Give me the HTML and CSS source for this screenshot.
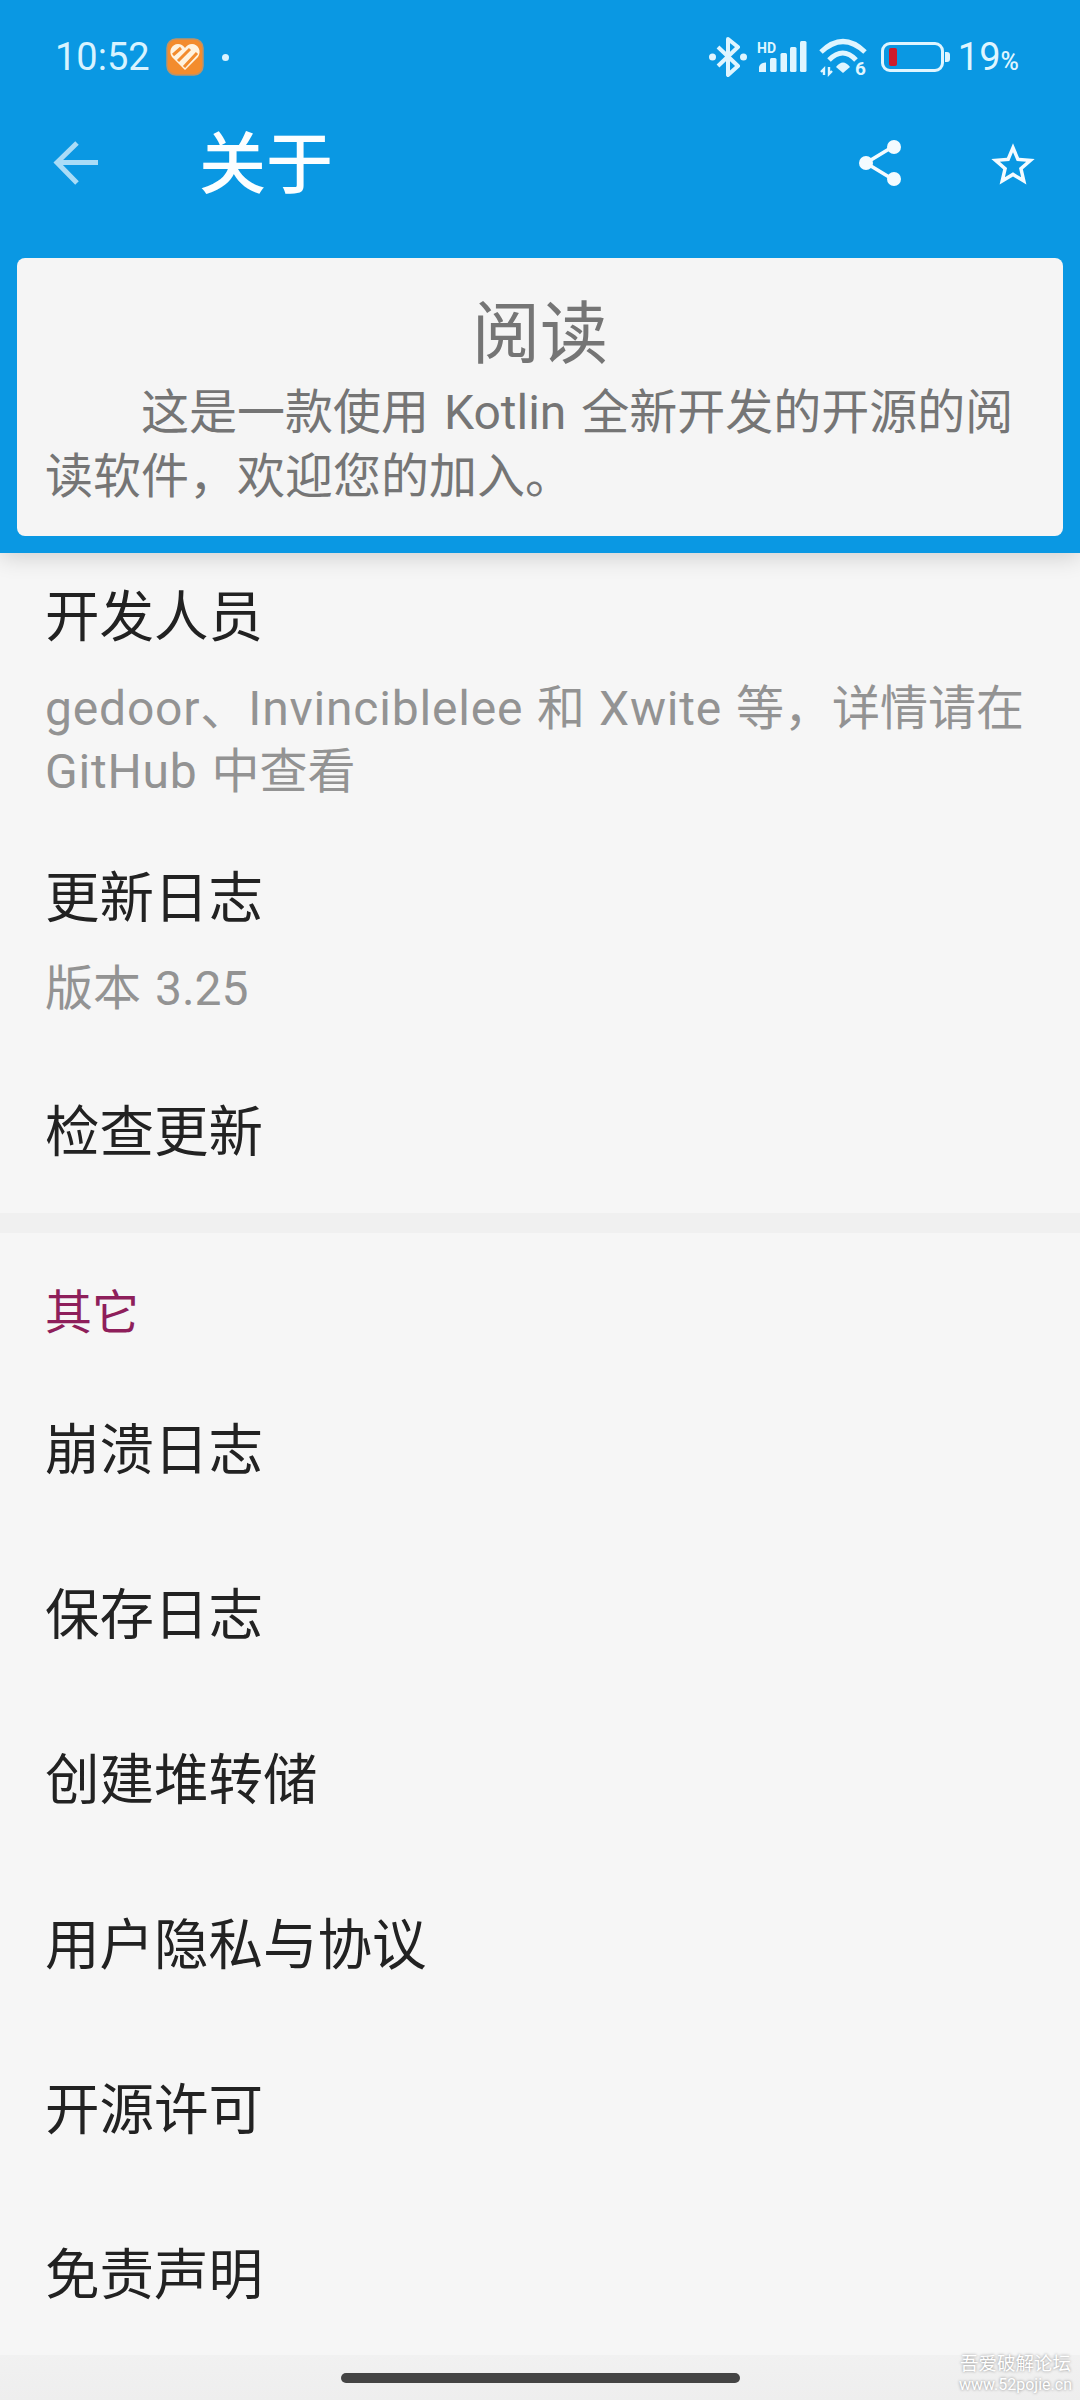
FILE: index.html
```html
<!DOCTYPE html>
<html lang="zh-CN">
<head>
<meta charset="utf-8">
<title>关于</title>
<link rel="stylesheet" href="styles.css">
</head>
<body>
<div class="page">
  <header class="appbar">
    <div class="status">
      <div class="status-left">
        <span class="time">10:52</span>
        <svg class="app-icon" width="38" height="38" viewBox="0 0 38 38">
          <rect x="1" y="1" width="36" height="36" rx="9" fill="#f38c2d" stroke="#b9936b" stroke-width="1.5"/>
          <path d="M19 32 L6 19 C2 13 6 6 12 6 C15 6 17 7.5 19 10 C21 7.5 23 6 26 6 C32 6 36 13 32 19 Z" fill="#fff3df"/>
          <path d="M7 17 L15 10 M12 23 L24 11 M18 29 L31 15" stroke="#f38c2d" stroke-width="3" fill="none"/>
        </svg>
        <span class="dot"></span>
      </div>
      <div class="status-right">
        <svg class="bt" width="38" height="40" viewBox="0 0 38 40">
          <path d="M9 10 L29 29 L19 38 V2 L29 10 L9 29" fill="none" stroke="#dff5ff" stroke-width="4" stroke-linejoin="round"/>
          <circle cx="3.5" cy="20" r="3.5" fill="#dff5ff"/>
          <circle cx="34.500" cy="20" r="3.5" fill="#dff5ff"/>
        </svg>
        <svg class="signal" width="50" height="32" viewBox="0 0 50 32">
          <text class="hd" x="0" y="12">HD</text>
          <path d="M2 31 V26 Q3 22 9 21.500 V31 Z" fill="#dff5ff"/>
          <rect x="13" y="17" width="6.500" height="14" rx="1.5" fill="#dff5ff"/>
          <rect x="23.500" y="12" width="6.500" height="19" rx="1.5" fill="#dff5ff"/>
          <rect x="33" y="6" width="6.500" height="25" rx="1.5" fill="#dff5ff"/>
          <rect x="43" y="0" width="6.500" height="31" rx="1.5" fill="#dff5ff"/>
        </svg>
        <svg class="wifi" width="50" height="52" viewBox="0 -6 50 52">
          <g fill="none" stroke="#dff5ff" stroke-width="5">
            <path d="M2 15 Q24 -6 46 15"/>
            <path d="M10 23 Q24 9 37 23"/>
          </g>
          <path d="M17 30 Q24 21 31 30 L24 36 Z" fill="#dff5ff"/>
          <path d="M5 38 V32 L2 35 M10 30 V37 L13 34" fill="none" stroke="#dff5ff" stroke-width="2.4"/>
          <text class="six" x="36" y="38">6</text>
        </svg>
        <div class="battery"><span class="battery-level"></span></div>
        <span class="battery-nub"></span>
        <span class="percent">19<small>%</small></span>
      </div>
    </div>
    <div class="toolbar">
      <svg class="back" width="46" height="46" viewBox="0 0 46 46">
        <path d="M24 3 L4 22.500 L24 43 M4 22.500 H45" fill="none" stroke="#a9dcf7" stroke-width="5"/>
      </svg>
      <h1 class="page-title">关于</h1>
      <svg class="share" width="46" height="50" viewBox="0 0 46 50">
        <path d="M36 8 L8 25 L36 42" fill="none" stroke="#f4fbff" stroke-width="3.6"/>
        <circle cx="36" cy="9" r="7" fill="#f4fbff"/>
        <circle cx="8" cy="25" r="7" fill="#f4fbff"/>
        <circle cx="36" cy="41" r="7" fill="#f4fbff"/>
      </svg>
      <svg class="star" width="52" height="52" viewBox="0 0 24 24">
        <path fill="#f4fbff" d="M22 9.240l-7.190-.620L12 2 9.190 8.630 2 9.240l5.460 4.730L5.820 21 12 17.270 18.180 21l-1.630-7.030L22 9.240zM12 15.400l-3.760 2.270 1-4.280-3.320-2.880 4.380-.380L12 6.100l1.710 4.040 4.380.380-3.320 2.880 1 4.280L12 15.400z"/>
      </svg>
    </div>
    <section class="card">
      <h2 class="card-title">阅读</h2>
      <p class="card-text">这是一款使用 Kotlin 全新开发的开源的阅读软件，欢迎您的加入。</p>
    </section>
  </header>

  <main class="content">
    <div class="group">
      <div class="item item-dev">
        <div class="item-title">开发人员</div>
        <div class="item-sub"><span class="latin">gedoor</span>、<span class="latin">Invinciblelee</span> 和 <span class="latin">Xwite</span> 等，详情请在 <span class="latin">GitHub</span> 中查看</div>
      </div>
      <div class="item item-log">
        <div class="item-title">更新日志</div>
        <div class="item-sub">版本 3.25</div>
      </div>
      <div class="row">检查更新</div>
    </div>
    <div class="divider"></div>
    <div class="group">
      <div class="section-label">其它</div>
      <div class="row">崩溃日志</div>
      <div class="row">保存日志</div>
      <div class="row">创建堆转储</div>
      <div class="row">用户隐私与协议</div>
      <div class="row">开源许可</div>
      <div class="row">免责声明</div>
    </div>
  </main>

  <footer class="navbar">
    <span class="handle"></span>
    <div class="watermark">
      <span class="wm-cn">吾爱破解论坛</span>
      <span class="wm-en">www.52pojie.cn</span>
    </div>
  </footer>
</div>
</body>
</html>
```
FILE: styles.css
```css
* { box-sizing: border-box; }
html, body { margin: 0; padding: 0; }
body {
  width: 1080px;
  height: 2400px;
  overflow: hidden;
  background: #f6f6f6;
  font-family: "Roboto", "Noto Sans CJK SC", sans-serif;
}
.page { display: flex; flex-direction: column; height: 2400px; }

.appbar {
  height: 553px;
  background: #0a98e3;
  padding: 0 17px;
  box-shadow: 0 4px 22px rgba(0, 0, 0, 0.16);
  position: relative;
  z-index: 1;
  flex: none;
}
.status {
  height: 114px;
  margin: 0 -17px;
  padding: 0 61px 0 55px;
  display: flex;
  justify-content: space-between;
  align-items: center;
}
.status-left { display: flex; align-items: center; }
.time { font-size: 38px; color: #d8f3ff; line-height: 1; width: 111px; }
.dot { width: 7px; height: 7px; border-radius: 50%; background: #d8f3ff; margin-left: 18px; }
.status-right { display: flex; align-items: center; }
.bt { margin-right: 10px; }
.signal { margin-right: 12px; }
.hd { font: 700 14px "Roboto", sans-serif; fill: #dff5ff; }
.six { font: 700 19px "Roboto", sans-serif; fill: #dff5ff; }
.wifi { margin-right: 12px; }
.battery {
  width: 63px;
  height: 30px;
  border: 3px solid #dff5ff;
  border-radius: 9px;
  padding: 3px 5px;
}
.battery-level { display: block; width: 8px; height: 18px; background: #cf1b2a; border-radius: 2px; }
.battery-nub { width: 5px; height: 10px; background: #dff5ff; border-radius: 0 3px 3px 0; margin: 0 8px 0 1px; }
.percent { font-size: 38px; color: #dff5ff; line-height: 1; }
.percent small { font-size: 25px; font-weight: 500; }

.toolbar {
  height: 98px;
  margin: 0 -17px;
  padding: 0 41px 0 53px;
  display: flex;
  align-items: center;
}
.page-title {
  margin: 4px 0 0 100px;
  flex: 1;
  font-size: 67px;
  font-weight: 500;
  line-height: 1;
  color: #fbfeff;
}
.share { margin-right: 83px; }
.star { margin-top: 3px; }

.card {
  margin-top: 46px;
  height: 278px;
  background: #f5f5f5;
  border-radius: 8px;
  padding: 35px 28px 0;
}
.card-title {
  margin: 0 0 4px;
  text-align: center;
  font-size: 68px;
  font-weight: 400;
  line-height: 84px;
  color: #757575;
}
.card-text {
  margin: 0;
  font-size: 48px;
  line-height: 64px;
  text-indent: 96px;
  word-spacing: 3px;
  color: #757575;
}

.content { flex: 1; min-height: 0; }
.item-title { font-size: 54.500px; line-height: 64px; color: #222; }
.item-sub { font-size: 48px; line-height: 63px; word-spacing: 2px; color: #939393; margin-top: 28px; }
.latin { letter-spacing: 0.8px; }
.item { padding: 0 45px; }
.item-dev { padding-top: 32px; padding-bottom: 13px; }
.item-log { padding-top: 50px; padding-bottom: 24px; }
.item-log .item-sub { margin-top: 27px; line-height: 64px; }
.row {
  height: 165px;
  padding: 0 45px;
  display: flex;
  align-items: center;
  font-size: 54.500px;
  color: #222;
}
.divider { height: 20px; margin-top: 3px; background: #f0f0f0; }
.section-label {
  height: 130px;
  padding: 48px 45px 0;
  font-size: 47px;
  line-height: 64px;
  color: #8e1f5b;
}

.navbar {
  height: 45px;
  flex: none;
  background: linear-gradient(#f1f1f1, #eeeeee);
  position: relative;
  display: flex;
  justify-content: center;
  padding-top: 18px;
}
.handle { width: 399px; height: 10px; border-radius: 5px; background: #444; }
.watermark {
  position: absolute;
  right: 8px;
  top: -2px;
  display: flex;
  flex-direction: column;
  align-items: center;
  color: #fff;
  text-shadow: 0 0 3px rgba(0, 0, 0, 0.45);
}
.wm-cn { font-size: 18.500px; line-height: 22px; }
.wm-en { font-size: 16px; line-height: 19px; }
```
